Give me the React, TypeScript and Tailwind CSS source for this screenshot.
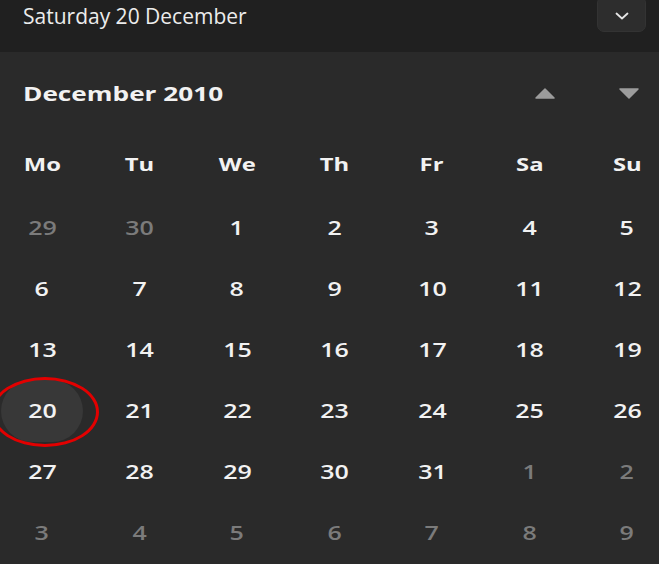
const weekdays = ["Mo", "Tu", "We", "Th", "Fr", "Sa", "Su"];

type Day = { n: number; dim?: boolean; selected?: boolean };

const days: Day[] = [
  { n: 29, dim: true },
  { n: 30, dim: true },
  ...Array.from({ length: 31 }, (_, i) => ({ n: i + 1, selected: i + 1 === 20 })),
  ...Array.from({ length: 9 }, (_, i) => ({ n: i + 1, dim: true })),
];

export default function App() {
  return (
    <div className="relative w-[659px] h-[564px] overflow-hidden bg-[#2a2a2a] text-[#f2f2f2] font-['Open_Sans','Noto_Sans',sans-serif]">
      {/* date header */}
      <div className="h-[52px] bg-[#202020] flex items-start justify-between pl-[23px] pr-[13px]">
        <div className="mt-[2px] text-[21px] leading-[28px] font-medium text-[#ececec]">Saturday 20 December</div>
        <button className="-mt-[4px] w-[49px] h-[36px] rounded-[7px] bg-[#2d2d2d] border border-[#333] flex items-center justify-center pt-[4px]">
          <svg width="14" height="8" viewBox="0 0 14 8" fill="none">
            <path d="M1.5 1.5 7 6.5 12.5 1.5" stroke="#e6e6e6" strokeWidth="1.8" strokeLinecap="round" strokeLinejoin="round" />
          </svg>
        </button>
      </div>

      {/* month nav */}
      <div className="h-[82px] flex items-center pl-[23px] pr-[20px] pt-[1px]">
        <div className="flex-1">
          <span className="inline-block origin-left scale-x-[1.31] text-[20px] font-bold">December 2010</span>
        </div>
        <div className="flex items-center gap-[64px]">
          <svg width="20" height="11" viewBox="0 0 20 11">
            <path d="M10 1 19 10H1Z" fill="#9c9c9c" stroke="#9c9c9c" strokeLinejoin="round" strokeWidth="1.5" />
          </svg>
          <svg width="20" height="11" viewBox="0 0 20 11">
            <path d="M1 1H19L10 10Z" fill="#9c9c9c" stroke="#9c9c9c" strokeLinejoin="round" strokeWidth="1.5" />
          </svg>
        </div>
      </div>

      {/* weekdays */}
      <div className="grid grid-cols-[repeat(7,40px)] gap-x-[57.5px] pl-[22px] h-[62px] items-center">
        {weekdays.map((d) => (
          <div key={d} className="flex justify-center">
            <span className="inline-block scale-x-[1.4] text-[17px] font-bold">{d}</span>
          </div>
        ))}
      </div>

      {/* days */}
      <div className="grid grid-cols-[repeat(7,40px)] auto-rows-[61px] gap-x-[57.5px] pl-[22px] pt-[1px]">
        {days.map((d, i) => (
          <div key={i} className="flex items-center justify-center">
            {d.selected ? (
              <div className="shrink-0 w-[82px] h-[62px] rounded-full bg-[#383838] flex items-center justify-center">
                <span className="inline-block scale-x-[1.25] text-[20px] font-semibold">{d.n}</span>
              </div>
            ) : (
              <span className={`inline-block scale-x-[1.25] text-[20px] font-semibold ${d.dim ? "text-[#7b7b7b]" : "text-[#f2f2f2]"}`}>
                {d.n}
              </span>
            )}
          </div>
        ))}
      </div>

      {/* annotation around selected day */}
      <div className="absolute left-[-9px] top-[377px] w-[108px] h-[70px] rounded-[50%] border-[3px] border-[#e30000]" />
    </div>
  );
}
